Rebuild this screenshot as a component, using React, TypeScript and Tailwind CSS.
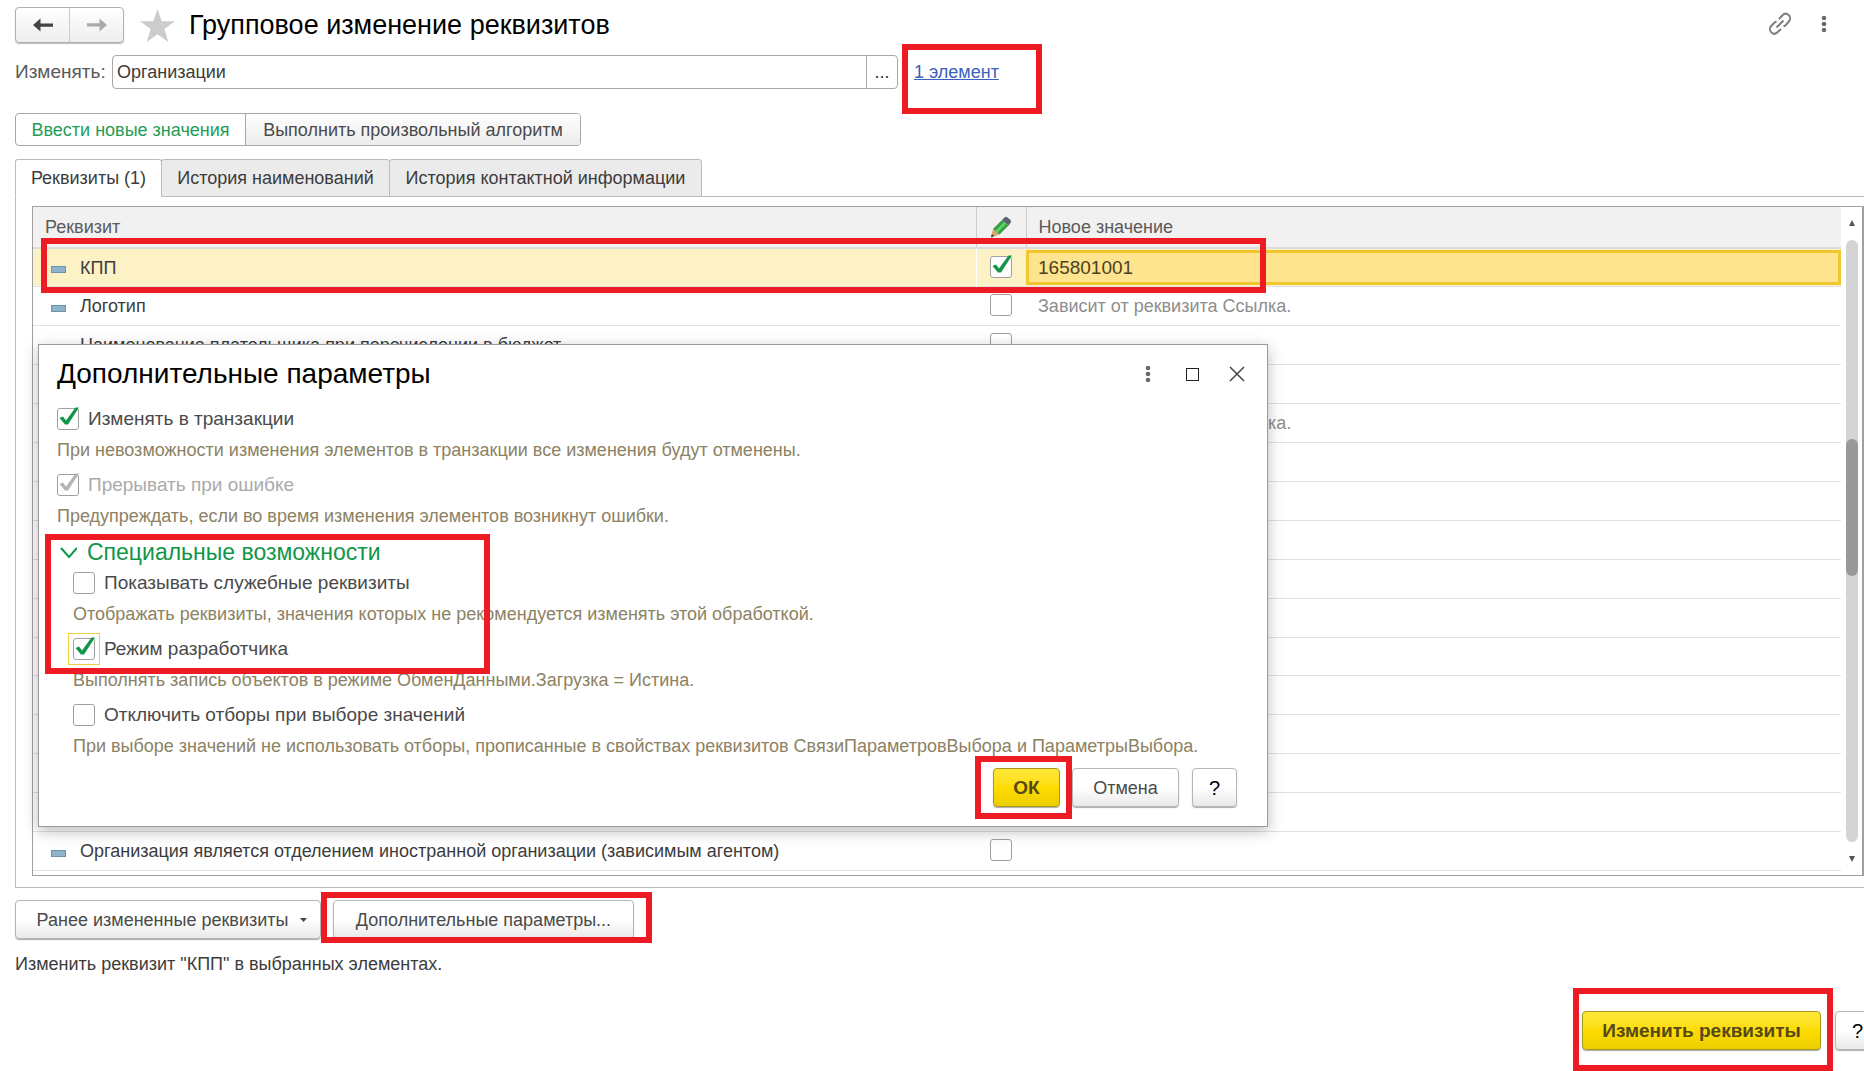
import type { ReactNode } from "react";
import clsx from "clsx";

type Row = {
	name?: string;
	value?: string;
	checked?: boolean;
	selected?: boolean;
};

const rows: Row[] = [
	{ name: "КПП", value: "165801001", checked: true, selected: true },
	{ name: "Логотип", value: "Зависит от реквизита Ссылка." },
	{ name: "Наименование плательщика при перечислении в бюджет" },
	{},
	{ value: "Зависит от реквизита Ссылка." },
	...Array.from({ length: 10 }, () => ({})),
	{
		name: "Организация является отделением иностранной организации (зависимым агентом)",
	},
];

const tabs = [
	{ title: "Реквизиты (1)", width: "w-[147px]" },
	{ title: "История наименований", width: "w-[229px]" },
	{ title: "История контактной информации", width: "w-[313px]" },
];

function Highlight({ className }: { className: string }) {
	return (
		<div
			aria-hidden="true"
			className={clsx(
				"pointer-events-none absolute z-20 border-6 border-[#ed1c24]",
				className,
			)}
		/>
	);
}

function KebabIcon() {
	return (
		<svg width="6" height="18" viewBox="0 0 6 18" fill="#6a6a6a">
			<circle cx="3" cy="3" r="2.3" />
			<circle cx="3" cy="9" r="2.3" />
			<circle cx="3" cy="15" r="2.3" />
		</svg>
	);
}

function LinkIcon() {
	return (
		<svg
			width="24"
			height="24"
			viewBox="0 0 24 24"
			fill="none"
			stroke="#808080"
			strokeWidth="2"
		>
			<path d="M8.500 15.500l7-7" />
			<path d="M11 7l3.500-3.800c2-2 4.500-1.700 6.200-.1s2 4.400.2 6.400L17.500 13.500l-2 1" />
			<path d="M8.500 9.500l-2 1L3.200 14c-1.800 2-1.600 4.700.1 6.400s4.200 1.900 6.200-.1L13 17" />
		</svg>
	);
}

function PencilIcon() {
	return (
		<svg width="22" height="22" viewBox="0 0 22 22" className="mx-auto">
			<path d="M1 21.500 3 13l6.500 5.500z" fill="#d9a76a" />
			<path d="M1 21.500l.8-3.500 2.500 2z" fill="#444" />
			<path d="M3 13 12 4l6.500 5.500-9 9z" fill="#3a9c44" />
			<path d="M5 15.200 14.200 5.800l2.300 2L7.200 17z" fill="#5fd45f" />
			<path
				d="M12 4l2.500-2.600q1.500-1.200 3 0l2.800 2.400q1.500 1.500.3 3L18.500 9.500z"
				fill="#5b6670"
			/>
		</svg>
	);
}

function ArrowIcon() {
	return (
		<svg width="20" height="14" viewBox="0 0 20 14" fill="currentColor">
			<path d="M0 7 7.500 0.500V5.500H20v3.200H7.500v4.800z" />
		</svg>
	);
}

type CheckBoxProps = {
	id?: string;
	label?: string;
	checked?: boolean;
	disabled?: boolean;
};

function CheckBox({ id, label, checked, disabled }: CheckBoxProps) {
	return (
		<span className="relative inline-block size-[22px] shrink-0 align-middle">
			<input
				id={id}
				type="checkbox"
				aria-label={label}
				defaultChecked={checked}
				disabled={disabled}
				className="peer block size-[22px] appearance-none rounded-[3px] border border-[#a0a0a0] bg-white"
			/>
			<svg
				viewBox="0 0 22 22"
				className="pointer-events-none absolute inset-0 hidden overflow-visible peer-checked:block"
			>
				<path
					d="M2.500 10l3.500-1.500 3 4L18.500-.5h3.500L11 16.500H8z"
					fill={disabled ? "#b5b5b5" : "#0f9648"}
				/>
			</svg>
		</span>
	);
}

type OptionProps = {
	id: string;
	label: string;
	hint: string;
	checked?: boolean;
	disabled?: boolean;
	focused?: boolean;
};

function Option({ id, label, hint, checked, disabled, focused }: OptionProps) {
	return (
		<div className="h-[66px]">
			<div className="flex h-8 items-center gap-[9px]">
				<span
					className={clsx(
						"flex",
						focused && "outline outline-offset-4 outline-[#f3cf3f]",
					)}
				>
					<CheckBox id={id} checked={checked} disabled={disabled} />
				</span>
				<label
					htmlFor={id}
					className={clsx(
						"text-[19px]",
						disabled ? "text-[#aaa]" : "text-[#4a4a4a]",
					)}
				>
					{label}
				</label>
			</div>
			<p className="leading-[30px] whitespace-nowrap text-[#8c8264]">{hint}</p>
		</div>
	);
}

type ButtonProps = {
	children: ReactNode;
	primary?: boolean;
	className?: string;
};

function Button({ children, primary, className }: ButtonProps) {
	return (
		<button
			type="button"
			className={clsx(
				"flex h-[39px] shrink-0 items-center justify-center rounded-[4px] border shadow-[0_1px_1px_#0005]",
				primary
					? "border-[#a8981c] bg-linear-to-b from-[#ffe838] via-[#fddc00] to-[#ecce00] text-[19px] font-bold text-[#55491a]"
					: "border-[#b5b5b5] bg-linear-to-b from-white via-white to-[#e9e9e9] text-[#4a4a4a]",
				className,
			)}
		>
			{children}
		</button>
	);
}

function Toolbar() {
	return (
		<header className="flex h-[50px] items-center pr-[37px] pl-[15px]">
			<div className="flex h-9 w-[109px] rounded-[4px] border border-[#b0b0b0] bg-linear-to-b from-white to-[#eee] shadow-[0_1px_1px_#0004]">
				<button
					type="button"
					aria-label="Назад"
					className="flex flex-1 items-center justify-center border-r border-[#ccc] text-[#444]"
				>
					<ArrowIcon />
				</button>
				<button
					type="button"
					aria-label="Вперед"
					className="flex flex-1 items-center justify-center text-[#aaa]"
				>
					<span className="rotate-180">
						<ArrowIcon />
					</span>
				</button>
			</div>
			<button type="button" aria-label="В избранное" className="ml-4">
				<svg width="35" height="33" viewBox="0 0 35 33" fill="#ccc">
					<path d="M17.500 0l4.200 12.300H35L24.300 20l4 13-10.800-7.800L6.700 33l4-13L0 12.300h13.300z" />
				</svg>
			</button>
			<h1 className="ml-[14px] text-[27px] text-black">
				Групповое изменение реквизитов
			</h1>
			<div className="ml-auto flex items-center gap-[29px] pb-[3px]">
				<button type="button" aria-label="Получить ссылку">
					<LinkIcon />
				</button>
				<button type="button" aria-label="Еще">
					<KebabIcon />
				</button>
			</div>
		</header>
	);
}

function Dialog() {
	return (
		<section
			role="dialog"
			aria-labelledby="dialog-title"
			className="absolute top-[137px] left-[5px] z-10 flex h-[483px] w-[1230px] flex-col border border-[#999] bg-white pt-[11px] pr-[30px] pl-[18px] shadow-[0_4px_14px_#0004]"
		>
			<div className="-mr-2 flex h-9 items-center">
				<h2 id="dialog-title" className="text-[28px] text-black">
					Дополнительные параметры
				</h2>
				<div className="ml-auto flex items-center">
					<button type="button" aria-label="Еще" className="mr-[35px]">
						<KebabIcon />
					</button>
					<button
						type="button"
						aria-label="Развернуть"
						className="mr-[30px] size-[13px] border border-[#222]"
					/>
					<button type="button" aria-label="Закрыть">
						<svg
							width="16"
							height="16"
							viewBox="0 0 16 16"
							stroke="#444"
							strokeWidth="1.500"
						>
							<path d="M1 1l14 14M15 1 1 15" />
						</svg>
					</button>
				</div>
			</div>
			<div className="mt-[11px]">
				<Option
					id="transaction"
					checked
					label="Изменять в транзакции"
					hint="При невозможности изменения элементов в транзакции все изменения будут отменены."
				/>
				<Option
					id="stop-on-error"
					checked
					disabled
					label="Прерывать при ошибке"
					hint="Предупреждать, если во время изменения элементов возникнут ошибки."
				/>
			</div>
			<div className="relative">
				<button
					type="button"
					className="mt-1 flex h-7 items-center gap-[10px] text-[23px] text-[#0f9648]"
				>
					<svg
						width="20"
						height="12"
						viewBox="0 0 20 12"
						fill="none"
						stroke="#0f9648"
						strokeWidth="2"
					>
						<path d="M4 1l8 9 8-9" />
					</svg>
					Специальные возможности
				</button>
				<Highlight className="-top-px -left-3 h-[140px] w-[445px]" />
			</div>
			<div className="pl-4">
				<Option
					id="service"
					label="Показывать служебные реквизиты"
					hint="Отображать реквизиты, значения которых не рекомендуется изменять этой обработкой."
				/>
				<Option
					id="developer"
					checked
					focused
					label="Режим разработчика"
					hint="Выполнять запись объектов в режиме ОбменДанными.Загрузка = Истина."
				/>
				<Option
					id="filters"
					label="Отключить отборы при выборе значений"
					hint="При выборе значений не использовать отборы, прописанные в свойствах реквизитов СвязиПараметровВыбора и ПараметрыВыбора."
				/>
			</div>
			<div className="mt-[3px] flex justify-end">
				<div className="relative mr-3">
					<Button primary className="w-[67px]">
						ОК
					</Button>
					<Highlight className="-top-3 -right-3 -bottom-3 -left-[18px]" />
				</div>
				<Button className="mr-[13px] w-[107px]">Отмена</Button>
				<Button className="w-[45px] text-xl text-black">?</Button>
			</div>
		</section>
	);
}

function AttributeTable() {
	return (
		<table className="h-[664px] flex-1 table-fixed border-collapse text-left">
			<colgroup>
				<col />
				<col className="w-[50px]" />
				<col className="w-[815px]" />
			</colgroup>
			<thead>
				<tr className="h-[41px] border-b-2 border-[#dcdcdc] bg-[#f1f1f1] text-[#5a5a5a]">
					<th className="p-0 pl-3 font-normal">Реквизит</th>
					<th
						aria-label="Изменять"
						className="border-x border-[#ccc] p-0 font-normal"
					>
						<PencilIcon />
					</th>
					<th className="p-0 pl-3 font-normal">Новое значение</th>
				</tr>
			</thead>
			<tbody>
				{rows.map((row, index) => (
					<tr
						key={index}
						className={clsx(
							"h-[38px] border-b border-[#e2e2e2]",
							row.selected && "bg-[#fdf1c6]",
						)}
					>
						<td className="p-0 pl-[18px] text-[#3c3c3c]">
							{row.name && (
								<div className="flex items-center gap-[14px]">
									<span className="mt-1 h-[7px] w-[15px] border border-[#6b93ad] bg-[#8fb3ca]" />
									{row.name}
								</div>
							)}
						</td>
						<td
							className={clsx(
								"p-0 pb-1 text-center leading-6",
								row.selected && "border-l border-white",
							)}
						>
							{row.name && <CheckBox label={row.name} checked={row.checked} />}
						</td>
						<td className="p-0">
							{row.selected ? (
								<input
									aria-label="Новое значение"
									defaultValue={row.value}
									className="block h-[35px] w-full border-3 border-[#f2c62e] bg-[#fee48e] pl-[9px] text-[19px] text-[#4a4020] outline-none"
								/>
							) : (
								<span className="pl-3 text-[#8e8e8e]">{row.value}</span>
							)}
						</td>
					</tr>
				))}
			</tbody>
		</table>
	);
}

function ScrollBar() {
	return (
		<div className="flex w-[21px] flex-col items-center py-[13px]">
			<svg width="6" height="6" viewBox="0 0 6 6" fill="#555">
				<path d="M3 0l3 6H0z" />
			</svg>
			<div className="my-[14px] w-3 flex-1 rounded-full bg-[#d4d4d4] pt-[199px]">
				<div className="h-[137px] rounded-full bg-[#999]" />
			</div>
			<svg width="6" height="6" viewBox="0 0 6 6" fill="#555">
				<path d="M3 6l3-6H0z" />
			</svg>
		</div>
	);
}

export default function App() {
	return (
		<main className="min-h-screen overflow-hidden bg-white font-['Liberation_Sans',Arial,sans-serif] text-lg text-[#4a4a4a]">
			<Toolbar />

			<div className="mt-[5px] flex h-[34px] items-center pl-[15px]">
				<label htmlFor="object" className="w-[97px] text-[19px] text-[#5a5a5a]">
					Изменять:
				</label>
				<div className="flex h-[34px] w-[786px] rounded-[4px] border border-[#a8a8a8]">
					<input
						id="object"
						defaultValue="Организации"
						className="min-w-0 flex-1 px-1 text-[#3c3c3c] outline-none"
					/>
					<button
						type="button"
						aria-label="Выбрать"
						className="w-[31px] border-l border-[#a8a8a8] text-[#333]"
					>
						...
					</button>
				</div>
				<div className="relative ml-4">
					<a href="#elements" className="text-[#3863bd] underline">
						1 элемент
					</a>
					<Highlight className="-top-[14px] -left-3 h-[70px] w-[140px]" />
				</div>
			</div>

			<div className="mt-6 ml-[15px] flex h-[33px] w-fit rounded-[4px] border border-[#a8a8a8]">
				<button type="button" className="w-[229px] text-[#1f9d55]">
					Ввести новые значения
				</button>
				<button
					type="button"
					className="w-[335px] rounded-r-[3px] border-l border-[#a8a8a8] bg-linear-to-b from-white to-[#ececec]"
				>
					Выполнить произвольный алгоритм
				</button>
			</div>

			<div role="tablist" className="relative mt-[13px] ml-[15px] flex h-[38px]">
				{tabs.map((tab, index) => (
					<button
						key={tab.title}
						type="button"
						role="tab"
						aria-selected={index === 0}
						className={clsx(
							"-mr-px rounded-t-[3px] border border-[#bbb] text-[#3c3c3c]",
							tab.width,
							index === 0 ? "border-b-white bg-white" : "bg-[#ebebeb]",
						)}
					>
						{tab.title}
					</button>
				))}
			</div>

			<div className="-mt-px ml-[15px] border border-r-0 border-[#bbb] pt-[9px] pb-[11px] pl-4">
				<div className="relative flex h-[670px] border border-r-2 border-[#a0a0a0]">
					<AttributeTable />
					<ScrollBar />
					<Highlight className="top-[31px] left-2 h-[55px] w-[1225px]" />
					<Dialog />
				</div>
			</div>

			<div className="mt-3 ml-[15px] flex">
				<Button className="w-[306px] gap-3 pl-2">
					Ранее измененные реквизиты
					<svg width="7" height="4" viewBox="0 0 7 4" fill="#444">
						<path d="M0 0h7L3.500 4z" />
					</svg>
				</Button>
				<div className="relative ml-3">
					<Button className="w-[301px]">Дополнительные параметры...</Button>
					<Highlight className="-top-2 -left-3 h-[51px] w-[331px]" />
				</div>
			</div>

			<p className="mt-[13px] ml-[15px] leading-6 text-[#3c3c3c]">
				Изменить реквизит "КПП" в выбранных элементах.
			</p>

			<footer className="mt-[35px] flex justify-end">
				<div className="relative mr-[14px]">
					<Button primary className="w-[239px]">
						Изменить реквизиты
					</Button>
					<Highlight className="-top-[23px] -left-[9px] h-[83px] w-[260px]" />
				</div>
				<Button className="-mr-4 w-[45px] text-xl text-black">?</Button>
			</footer>
		</main>
	);
}
